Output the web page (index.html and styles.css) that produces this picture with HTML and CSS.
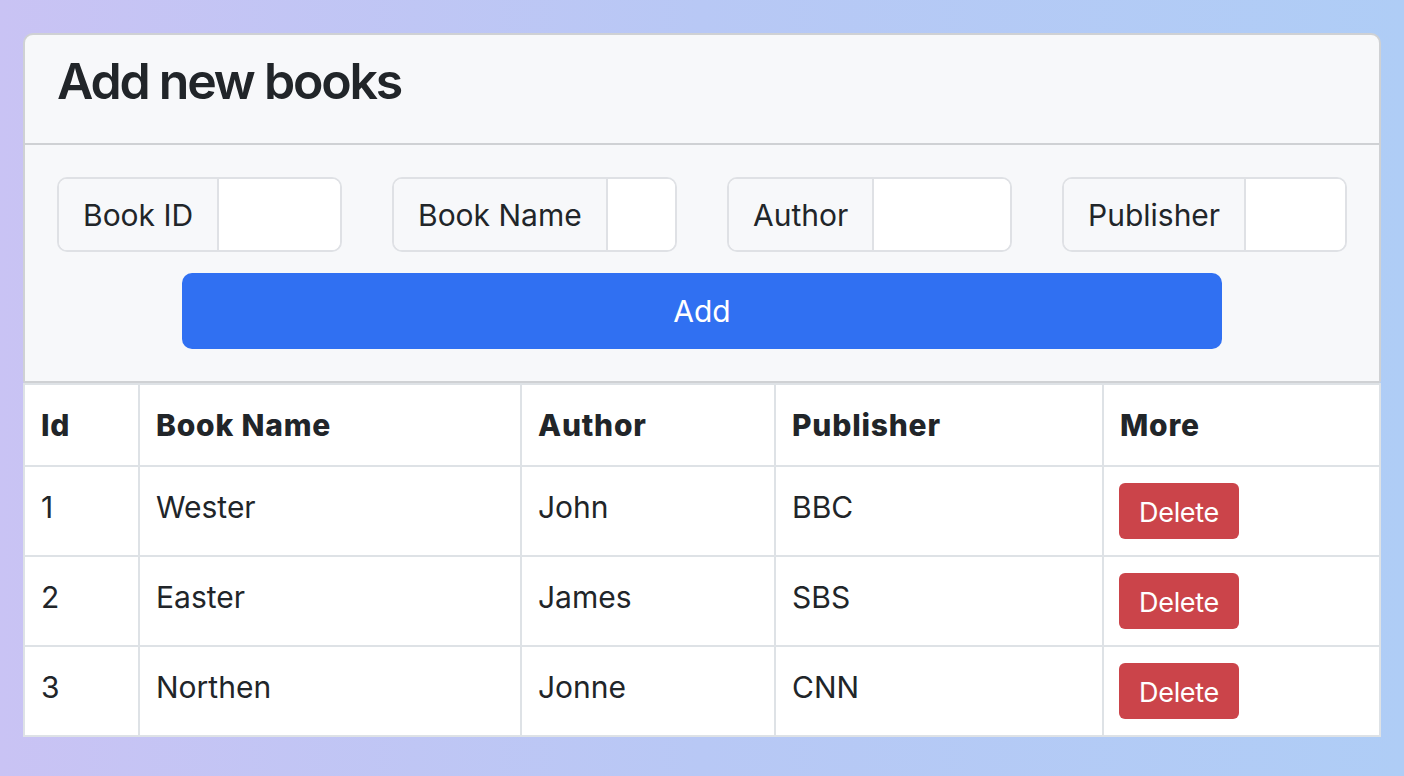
FILE: index.html
```html
<!DOCTYPE html>
<html lang="en">
<head>
<meta charset="utf-8">
<title>Books</title>
<link rel="stylesheet" href="styles.css">
</head>
<body>
<div class="page">
  <div class="card">
    <div class="card-header">
      <h3 class="title">Add new books</h3>
    </div>
    <div class="card-body">
      <div class="fields">
        <div class="input-group"><span class="input-label">Book ID</span><input class="input" type="text"></div>
        <div class="input-group"><span class="input-label">Book Name</span><input class="input" type="text"></div>
        <div class="input-group"><span class="input-label">Author</span><input class="input" type="text"></div>
        <div class="input-group"><span class="input-label">Publisher</span><input class="input" type="text"></div>
      </div>
      <button class="btn-add" type="button">Add</button>
    </div>
  </div>
  <table class="books">
    <thead>
      <tr>
        <th class="c1">Id</th>
        <th class="c2">Book Name</th>
        <th class="c3">Author</th>
        <th class="c4">Publisher</th>
        <th class="c5">More</th>
      </tr>
    </thead>
    <tbody>
      <tr><td>1</td><td>Wester</td><td>John</td><td>BBC</td><td class="action"><button class="btn-delete" type="button">Delete</button></td></tr>
      <tr><td>2</td><td>Easter</td><td>James</td><td>SBS</td><td class="action"><button class="btn-delete" type="button">Delete</button></td></tr>
      <tr><td>3</td><td>Northen</td><td>Jonne</td><td>CNN</td><td class="action"><button class="btn-delete" type="button">Delete</button></td></tr>
    </tbody>
  </table>
</div>
</body>
</html>
```
FILE: styles.css
```css
* { box-sizing: border-box; }

html, body {
  margin: 0;
  height: 100%;
}

body {
  font-family: Inter, "Noto Sans", "Liberation Sans", sans-serif;
  font-size: 30px;
  line-height: 45px;
  color: #212529;
  background: linear-gradient(90deg, #c9c3f4 0%, #b8c8f5 50%, #afcdf6 100%);
}

.page {
  padding: 33px 23px 0;
}

.card {
  background: #f7f8fa;
  border: 2px solid #cfd1d4;
  border-radius: 10px 10px 2px 2px;
}

.card-header {
  padding: 15px 32px;
  border-bottom: 2px solid #cfd1d4;
}

.title {
  margin: 0 0 16px;
  font-size: 50px;
  line-height: 62px;
  font-weight: 600;
  letter-spacing: -2.2px;
}

.card-body {
  padding: 32px;
}

.fields {
  display: grid;
  grid-template-columns: repeat(4, 1fr);
  column-gap: 50px;
}

.input-group {
  display: flex;
  height: 75px;
  border: 2px solid #dfe1e5;
  border-radius: 10px;
  overflow: hidden;
  background: #fff;
}

.input-label {
  padding: 14px 24px 12px;
  background: #f7f8fa;
  border-right: 2px solid #dfe1e5;
  white-space: nowrap;
}

.input {
  flex: 1;
  min-width: 0;
  border: 0;
  background: #fff;
  font: inherit;
  padding: 0 12px;
  outline: none;
}

.btn-add {
  display: block;
  width: 1040px;
  height: 76px;
  margin: 21px auto 0;
  border: 0;
  border-radius: 10px;
  background: #3070f2;
  color: #fff;
  font: inherit;
  padding: 0;
}

.books {
  width: 100%;
  table-layout: fixed;
  border-collapse: separate;
  border-spacing: 0;
  background: #fff;
  border-top: 2px solid #dee2e6;
  border-left: 2px solid #dee2e6;
}

.books th,
.books td {
  border-right: 2px solid #dee2e6;
  border-bottom: 2px solid #dee2e6;
  text-align: left;
  vertical-align: top;
  padding: 18px 16px 16px;
}

.books th {
  font-weight: 800;
  letter-spacing: 0.8px;
  padding: 18px 16px 17px;
}

.books .c1 { width: 115px; }
.books .c2 { width: 382px; }
.books .c3 { width: 254px; }
.books .c4 { width: 328px; }

.books td.action {
  padding: 16px 15px;
}

.btn-delete {
  display: block;
  height: 56px;
  padding: 10px 20px 6px;
  border: 0;
  border-radius: 6px;
  background: #cb444a;
  color: #fff;
  font-family: inherit;
  font-size: 27px;
  letter-spacing: -0.3px;
  line-height: 40px;
}
```
